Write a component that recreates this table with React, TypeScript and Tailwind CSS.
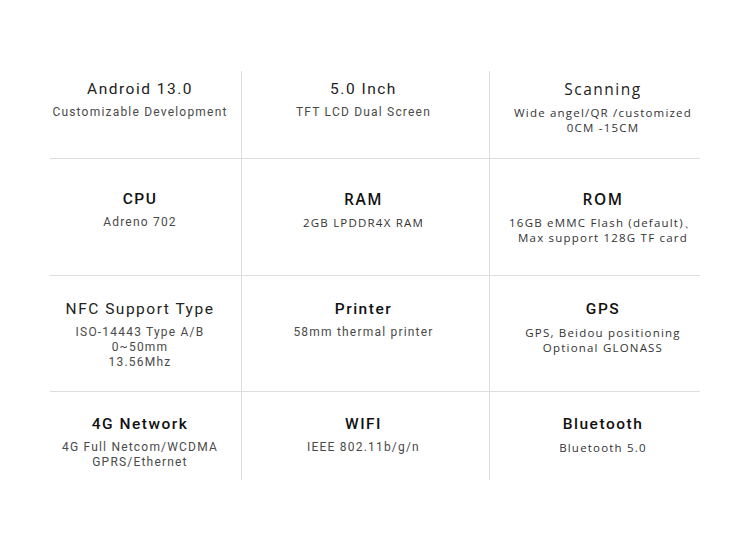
const roboto = "font-['Roboto',sans-serif]";
const openSans = "font-['Open_Sans',sans-serif]";

type Spec = {
  title: string;
  lines: string[];
  titleClass: string;
  subClass: string;
};

const rLight = `${roboto} font-normal text-[#222222]`;
const rMed = `${roboto} font-medium text-[#111111]`;
const osSub = `${openSans} font-normal text-[11.5px] tracking-[1.2px] text-[#333333]`;
const rSub = `${roboto} font-normal text-[12px] tracking-[1.2px] text-[#4a4a4a]`;

const rows: { pad: string; height: string; cells: Spec[] }[] = [
  {
    pad: "pt-[7px]",
    height: "h-[88px]",
    cells: [
      { title: "Android 13.0", lines: ["Customizable Development"], titleClass: rLight, subClass: rSub },
      { title: "5.0 Inch", lines: ["TFT LCD Dual Screen"], titleClass: rLight, subClass: rSub },
      { title: "Scanning", lines: ["Wide angel/QR /customized", "0CM -15CM"], titleClass: `${openSans} font-normal text-[#222222]`, subClass: osSub },
    ],
  },
  {
    pad: "pt-[29px]",
    height: "h-[117px]",
    cells: [
      { title: "CPU", lines: ["Adreno 702"], titleClass: rMed, subClass: rSub },
      { title: "RAM", lines: ["2GB LPDDR4X RAM"], titleClass: `${openSans} font-semibold text-[#111111]`, subClass: osSub },
      { title: "ROM", lines: ["16GB eMMC Flash (default)、", "Max support 128G TF card"], titleClass: `${openSans} font-semibold text-[#111111]`, subClass: osSub },
    ],
  },
  {
    pad: "pt-[22px]",
    height: "h-[116px]",
    cells: [
      { title: "NFC Support Type", lines: ["ISO-14443 Type A/B", "0~50mm", "13.56Mhz"], titleClass: rLight, subClass: rSub },
      { title: "Printer", lines: ["58mm thermal printer"], titleClass: rMed, subClass: rSub },
      { title: "GPS", lines: ["GPS, Beidou positioning", "Optional GLONASS"], titleClass: rMed, subClass: osSub },
    ],
  },
  {
    pad: "pt-[21px]",
    height: "h-[88px]",
    cells: [
      { title: "4G Network", lines: ["4G Full Netcom/WCDMA", "GPRS/Ethernet"], titleClass: rMed, subClass: rSub },
      { title: "WIFI", lines: ["IEEE 802.11b/g/n"], titleClass: rMed, subClass: rSub },
      { title: "Bluetooth", lines: ["Bluetooth 5.0"], titleClass: rMed, subClass: osSub },
    ],
  },
];

// per column: width, border and the small offset of the centred text
const cols = [
  "w-[191px] pr-[11px]",
  "w-[248px] border-l border-[#dddddd] pr-[4px]",
  "w-[211px] border-l border-[#dddddd] pl-[16px]",
];

function Cell({ spec, col, pad }: { spec: Spec; col: number; pad: string }) {
  return (
    <div className={`${cols[col]} ${pad} flex flex-col items-center text-center`}>
      <div className={`${spec.titleClass} text-[15.5px] leading-[22px] tracking-[1.5px]`}>
        {spec.title}
      </div>
      <div className={`${spec.subClass} mt-[5px] leading-[15px]`}>
        {spec.lines.map((l) => (
          <div key={l}>{l}</div>
        ))}
      </div>
    </div>
  );
}

export default function App() {
  return (
    <div className="w-[750px] h-[550px] bg-white pt-[71px] pl-[50px]">
      <div className="w-[650px] flex flex-col">
        {rows.map((row, i) => (
          <div
            key={i}
            className={`flex ${row.height} ${i < rows.length - 1 ? "border-b border-[#dddddd]" : ""}`}
          >
            {row.cells.map((c, j) => (
              <Cell key={c.title} spec={c} col={j} pad={row.pad} />
            ))}
          </div>
        ))}
      </div>
    </div>
  );
}
